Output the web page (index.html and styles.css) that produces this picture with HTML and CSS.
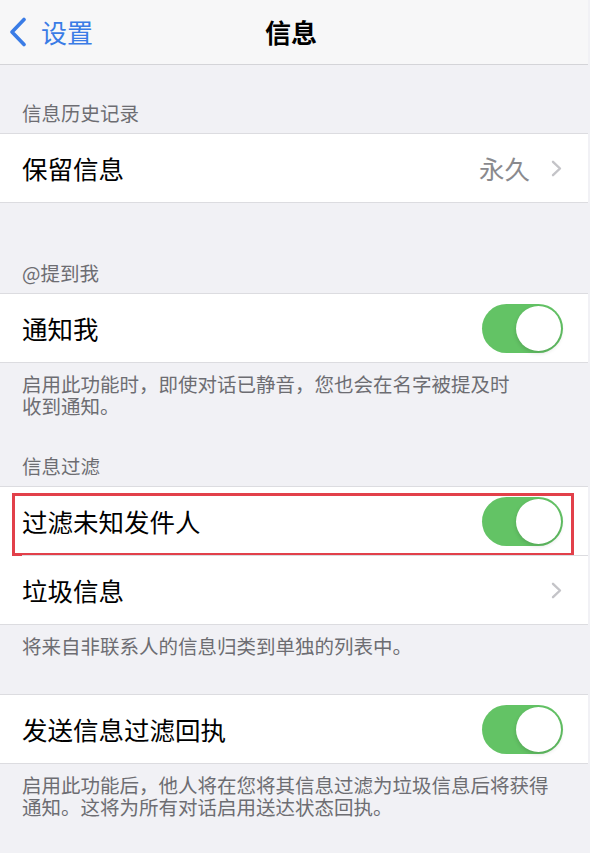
FILE: index.html
```html
<!DOCTYPE html>
<html>
<head>
    <meta charset="utf-8">
    <title>信息</title>
    <link rel="stylesheet" href="styles.css">
</head>
<body>
    <div class="screen">
        <div class="navbar">
            <div class="back">
                <svg width="20" height="30" viewBox="0 0 20 30"><path d="M16 2.5 L4 15 L16 27.5" fill="none" stroke="#3a7ce6" stroke-width="3.6" stroke-linecap="round" stroke-linejoin="round"/></svg>
                <span>设置</span>
            </div>
            <div class="title">信息</div>
            <div></div>
        </div>

        <div class="group first">
            <div class="group-header">信息历史记录</div>
            <div class="list">
                <div class="row">
                    <span class="label">保留信息</span>
                    <span class="value">永久</span>
                    <svg class="chevron" width="11" height="17" viewBox="0 0 11 17"><path d="M2 1.8 L9 8.5 L2 15.2" fill="none" stroke="#c4c4c8" stroke-width="2.4" stroke-linecap="round" stroke-linejoin="round"/></svg>
                </div>
            </div>
            <div class="group-spacer"></div>
        </div>

        <div class="group">
            <div class="group-header">@提到我</div>
            <div class="list">
                <div class="row">
                    <span class="label">通知我</span>
                    <div class="toggle on"><div class="knob"></div></div>
                </div>
            </div>
            <div class="group-footer">启用此功能时，即使对话已静音，您也会在名字被提及时<br>收到通知。</div>
        </div>

        <div class="group">
            <div class="group-header">信息过滤</div>
            <div class="list">
                <div class="row">
                    <span class="label">过滤未知发件人</span>
                    <div class="toggle on"><div class="knob"></div></div>
                    <div class="highlight"></div>
                </div>
                <div class="row">
                    <span class="label">垃圾信息</span>
                    <svg class="chevron" width="11" height="17" viewBox="0 0 11 17"><path d="M2 1.8 L9 8.5 L2 15.2" fill="none" stroke="#c4c4c8" stroke-width="2.4" stroke-linecap="round" stroke-linejoin="round"/></svg>
                </div>
            </div>
            <div class="group-footer">将来自非联系人的信息归类到单独的列表中。</div>
        </div>

        <div class="group">
            <div class="list">
                <div class="row">
                    <span class="label">发送信息过滤回执</span>
                    <div class="toggle on"><div class="knob"></div></div>
                </div>
            </div>
            <div class="group-footer">启用此功能后，他人将在您将其信息过滤为垃圾信息后将获得<br>通知。这将为所有对话启用送达状态回执。</div>
        </div>
    </div>
</body>
</html>
```

FILE: styles.css
```css
body { margin: 0; background: #f1f1f5; font-family: "Noto Sans CJK SC", "Noto Sans", sans-serif; }
.screen { width: 588px; height: 853px; overflow: hidden; background: #f1f1f5; }

.navbar { height: 64px; display: grid; grid-template-columns: 1fr auto 1fr; align-items: center; background: #f7f7f8; border-bottom: 1px solid #d4d4d8; }
.back { display: flex; align-items: center; gap: 13px; padding-left: 8px; color: #3a7ce6; font-size: 26px; line-height: 30px; }
.back svg { display: block; }
.title { font-size: 26px; font-weight: 700; color: #000; line-height: 30px; margin-left: -6px; }

.group { margin-top: 37px; }
.group.first { margin-top: 36px; }
.group-header { padding: 0 22px 8px; font-size: 19.5px; line-height: 24px; color: #6d6d72; }
.group-spacer { height: 21px; }
.group-footer { padding: 10px 22px 0; font-size: 19.5px; line-height: 22px; color: #6d6d72; }

.list { background: #fff; border-top: 1px solid #dcdce0; border-bottom: 1px solid #dcdce0; }
.row { position: relative; height: 68px; display: flex; align-items: center; padding: 0 25px 0 22px; }
.row + .row::before { content: ""; position: absolute; top: -1px; left: 22px; right: 0; height: 1px; background: #dcdce0; }
.row + .row { margin-top: 1px; }
.label { flex: 1; font-size: 25.5px; color: #000; line-height: 30px; }
.value { font-size: 25.5px; color: #8a8a8e; line-height: 30px; margin-right: 21px; }
.chevron { display: block; margin-right: 1px; }

.toggle { width: 81px; height: 49px; border-radius: 25px; background: #e5e5ea; position: relative; }
.toggle.on { background: #63c365; }
.knob { position: absolute; top: 2px; right: 2px; width: 45px; height: 45px; border-radius: 50%; background: #fff; box-shadow: 0 2px 4px rgba(0,0,0,0.15); }

.highlight { position: absolute; top: 6px; left: 12px; width: 562px; height: 63px; box-sizing: border-box; border: 3px solid #e2404a; }
```
